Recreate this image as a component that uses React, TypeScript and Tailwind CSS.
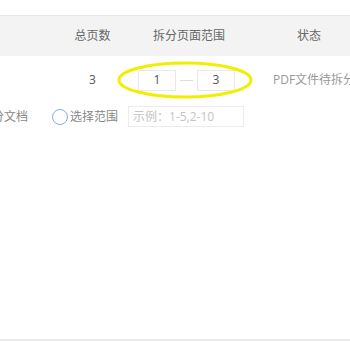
import React from 'react';

const font = { fontFamily: '"Open Sans", "Noto Sans CJK SC", sans-serif' };

export default function App() {
  return (
    <div className="relative w-[350px] h-[364px] bg-white overflow-hidden text-[12px]" style={font}>
      {/* Table header */}
      <div className="mt-[15px] h-[41px] flex items-center bg-[#f3f3f3] border-t border-[#e6e6e6] text-[#666]">
        <div className="w-[55px] shrink-0" />
        <div className="w-[75px] shrink-0 text-center">总页数</div>
        <div className="w-[118px] shrink-0 text-center">拆分页面范围</div>
        <div className="w-[122px] shrink-0 text-center">状态</div>
      </div>

      {/* Row */}
      <div className="h-[48px] flex items-center">
        <div className="w-[55px] shrink-0" />
        <div className="w-[75px] shrink-0 text-center text-[#555]">3</div>
        <div className="w-[118px] shrink-0 flex items-center pl-[8px]">
          <div className="w-[38px] h-[21px] border border-[#e8e8e8] flex items-center justify-center text-[#555]">1</div>
          <div className="w-[13px] h-px bg-[#ddd] mx-[4px]" />
          <div className="w-[38px] h-[21px] border border-[#e8e8e8] flex items-center justify-center text-[#555]">3</div>
        </div>
        <div className="shrink-0 pl-[25px] text-[#999] whitespace-nowrap">PDF文件待拆分</div>
      </div>

      {/* Split options */}
      <div className="flex items-center h-[21px] mt-[2px]">
        <span className="-ml-[8px] text-[#888] whitespace-nowrap">分文档</span>
        <span className="ml-[24px] w-[16px] h-[16px] rounded-full border border-[#86a8f0] shrink-0" />
        <span className="ml-[2px] text-[#888] whitespace-nowrap">选择范围</span>
        <div className="ml-[10px] w-[116px] h-[21px] border border-[#ececec] flex items-center pl-[4px] text-[#c4c4c4] whitespace-nowrap">
          示例：1-5,2-10
        </div>
      </div>

      {/* Bottom divider */}
      <div className="absolute left-0 right-0 top-[339px] h-[2px] bg-[#ebebeb]" />

      {/* Annotation ellipse */}
      <svg className="absolute left-[117px] top-[61px]" width="136" height="38" viewBox="0 0 136 38">
        <ellipse cx="68" cy="19" rx="66" ry="17" fill="none" stroke="#f2ee00" strokeWidth="3" />
      </svg>
    </div>
  );
}
